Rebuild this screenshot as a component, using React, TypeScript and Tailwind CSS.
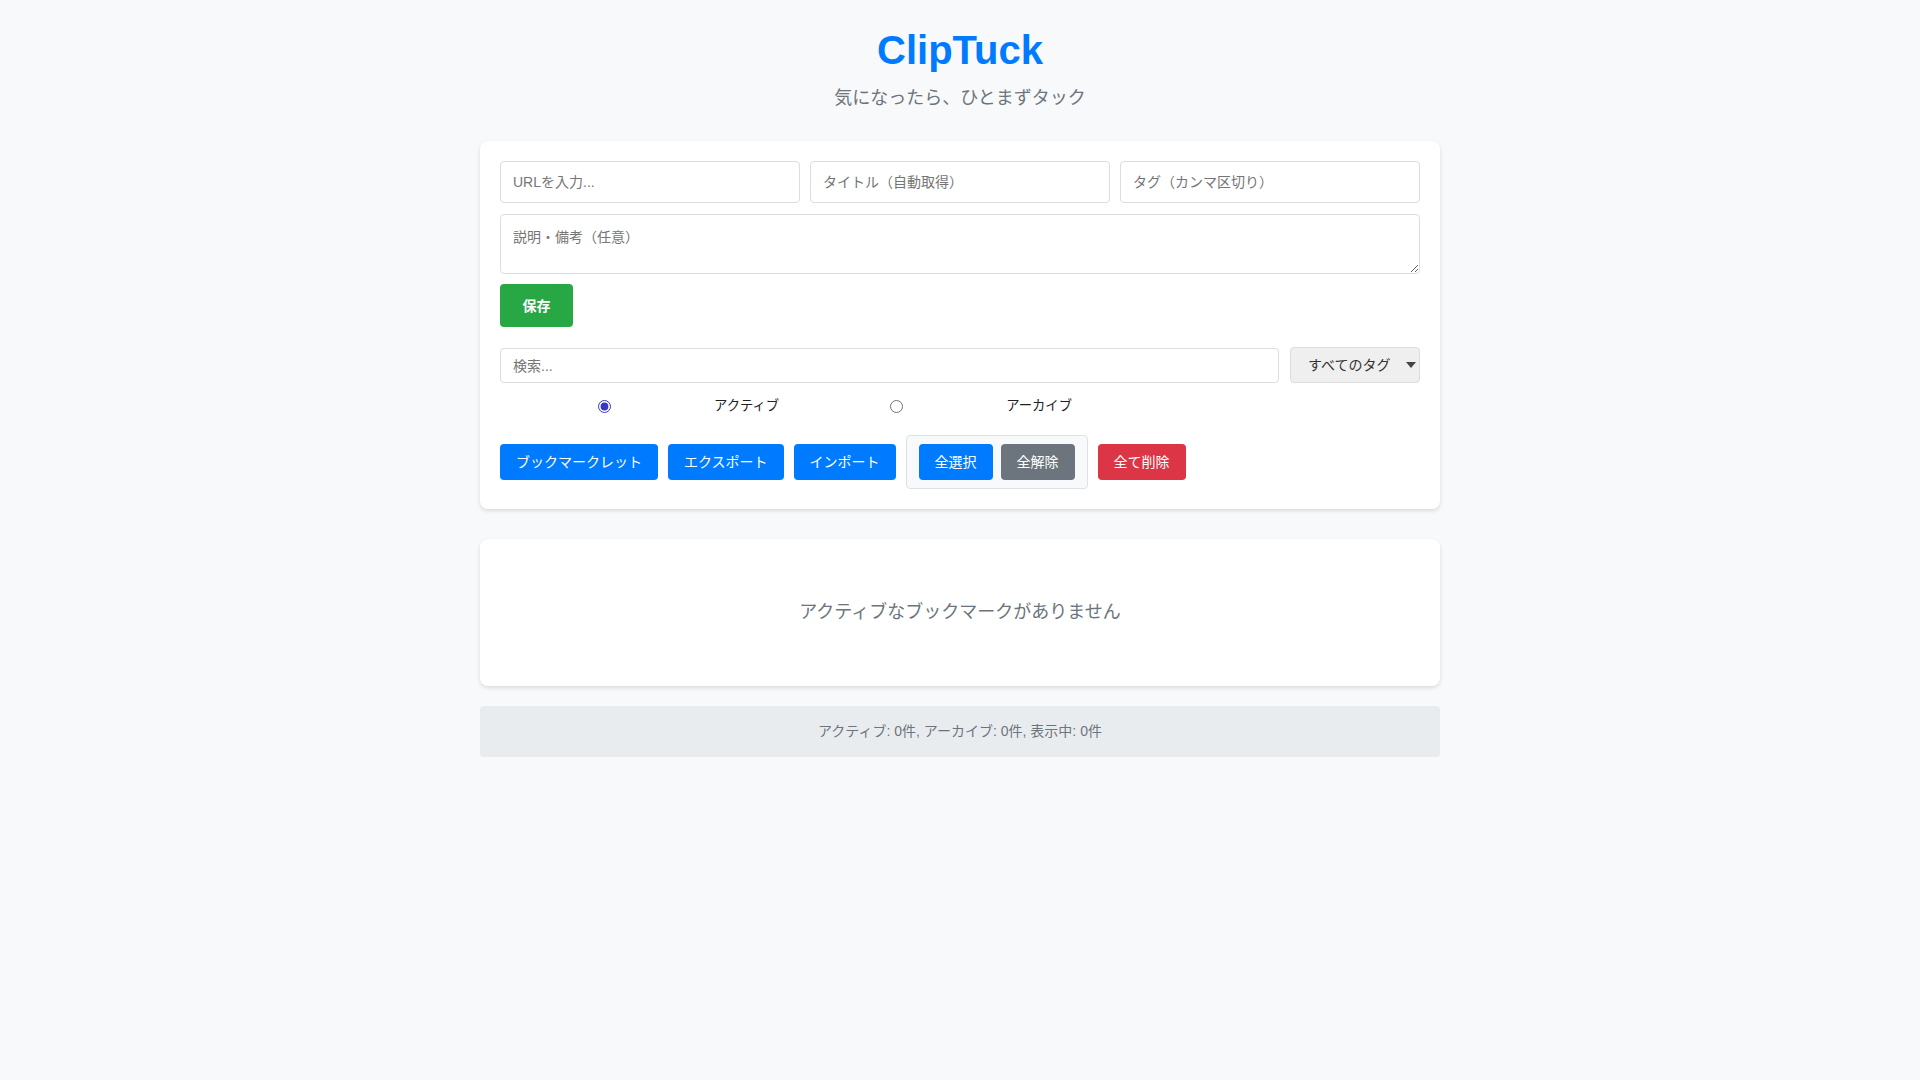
import { useState } from 'react';

const font = { fontFamily: '"Liberation Sans", "Noto Sans CJK JP", sans-serif' };

export default function App() {
  const [mode, setMode] = useState<'active' | 'archive'>('active');

  return (
    <div className="min-h-screen bg-[#f8f9fa] text-[#212529]" style={font}>
      <div className="max-w-[960px] mx-auto pt-[26px] pb-10">
        <header className="text-center mb-[29px]">
          <h1 className="text-[40px] leading-[48px] font-bold text-[#007bff] mb-[11px]">ClipTuck</h1>
          <p className="text-[18px] leading-[27px] text-[#6c757d]">気になったら、ひとまずタック</p>
        </header>

        {/* 入力フォーム + 操作 */}
        <section className="bg-white rounded-lg p-5 shadow-[0_2px_4px_rgba(0,0,0,0.12)]">
          <div className="grid grid-cols-3 gap-[10px]">
            <input
              type="text"
              placeholder="URLを入力..."
              className="h-[42px] px-3 text-sm border border-[#ddd] rounded-[4px] placeholder:text-[#757575] outline-none"
            />
            <input
              type="text"
              placeholder="タイトル（自動取得）"
              className="h-[42px] px-3 text-sm border border-[#ddd] rounded-[4px] placeholder:text-[#757575] outline-none"
            />
            <input
              type="text"
              placeholder="タグ（カンマ区切り）"
              className="h-[42px] px-3 text-sm border border-[#ddd] rounded-[4px] placeholder:text-[#757575] outline-none"
            />
          </div>
          <textarea
            placeholder="説明・備考（任意）"
            className="block w-full mt-[11px] h-[60px] px-3 py-3 text-sm leading-[21px] border border-[#ddd] rounded-[4px] placeholder:text-[#757575] outline-none"
          />
          <button className="mt-[10px] w-[73px] h-[43px] bg-[#28a745] text-white text-sm font-bold rounded-[4px]">
            保存
          </button>

          <div className="flex gap-[11px] mt-5">
            <input
              type="text"
              placeholder="検索..."
              className="flex-1 h-[35px] mt-px px-3 text-sm border border-[#ddd] rounded-[4px] placeholder:text-[#757575] outline-none"
            />
            <div className="relative">
              <select className="appearance-none w-[130px] h-[36px] pl-[17px] pr-6 text-sm text-[#333] bg-[#efefef] border border-[#ddd] rounded-[4px] outline-none">
                <option>すべてのタグ</option>
              </select>
              <span className="pointer-events-none absolute right-[4px] top-[15px] w-0 h-0 border-l-[5px] border-r-[5px] border-t-[6px] border-l-transparent border-r-transparent border-t-[#444]" />
            </div>
          </div>

          <div
            className="flex gap-[13px] mt-[12px] h-[20px] text-[13.33px] font-normal text-[#222]"
            style={{ fontFamily: '"Noto Sans CJK JP", sans-serif' }}
          >
            <label className="flex items-center">
              <span className="w-[208px] flex justify-center">
                <input
                  type="radio"
                  name="mode"
                  checked={mode === 'active'}
                  onChange={() => setMode('active')}
                  className="w-[13px] h-[13px] mt-[3px] accent-[#3838c0]"
                />
              </span>
              <span className="ml-[6px]">アクティブ</span>
            </label>
            <label className="flex items-center">
              <span className="w-[208px] flex justify-center">
                <input
                  type="radio"
                  name="mode"
                  checked={mode === 'archive'}
                  onChange={() => setMode('archive')}
                  className="w-[13px] h-[13px] mt-[3px] accent-[#3838c0]"
                />
              </span>
              <span className="ml-[6px]">アーカイブ</span>
            </label>
          </div>

          <div className="flex items-center gap-[10px] mt-5">
            <button className="h-[36px] px-4 text-sm text-white bg-[#007bff] rounded-[4px]">ブックマークレット</button>
            <button className="h-[36px] px-4 text-sm text-white bg-[#007bff] rounded-[4px]">エクスポート</button>
            <button className="h-[36px] px-4 text-sm text-white bg-[#007bff] rounded-[4px]">インポート</button>
            <div className="flex gap-2 px-3 py-2 bg-[#f8f9fa] border border-[#dee2e6] rounded-[4px]">
              <button className="h-[36px] px-4 text-sm text-white bg-[#007bff] rounded-[4px]">全選択</button>
              <button className="h-[36px] px-4 text-sm text-white bg-[#6c757d] rounded-[4px]">全解除</button>
            </div>
            <button className="h-[36px] px-4 text-sm text-white bg-[#dc3545] rounded-[4px]">全て削除</button>
          </div>
        </section>

        {/* ブックマーク一覧 */}
        <section className="mt-[30px] bg-white rounded-lg py-[60px] text-center shadow-[0_2px_4px_rgba(0,0,0,0.12)]">
          <p className="text-[18px] leading-[27px] text-[#6c757d]">
            {mode === 'active' ? 'アクティブなブックマークがありません' : 'アーカイブされたブックマークがありません'}
          </p>
        </section>

        <footer className="mt-5 bg-[#e9ecef] rounded-[4px] py-[15px] text-center text-sm leading-[21px] text-[#6c757d]">
          アクティブ: 0件, アーカイブ: 0件, 表示中: 0件
        </footer>
      </div>
    </div>
  );
}
